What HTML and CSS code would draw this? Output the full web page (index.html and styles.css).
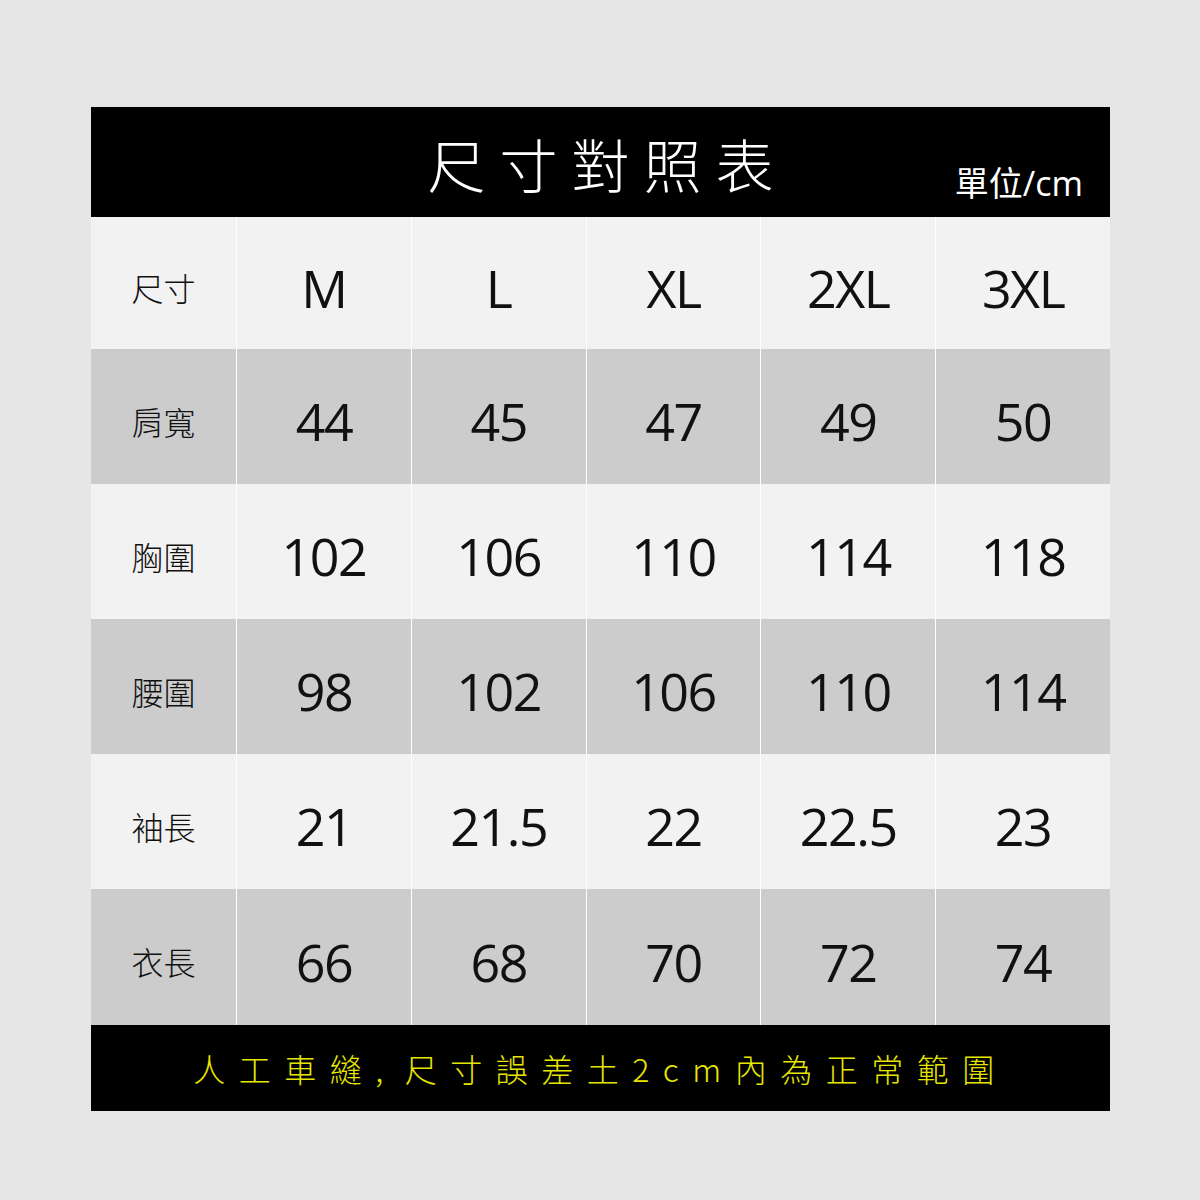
FILE: index.html
```html
<!DOCTYPE html>
<html lang="zh-Hant">
<head>
<meta charset="utf-8">
<title>尺寸對照表</title>
<link rel="stylesheet" href="styles.css">
</head>
<body>
<div class="chart">
  <div class="head">
    <h1 class="title">尺寸對照表</h1>
    <span class="unit">單位/cm</span>
  </div>
  <div class="row light">
    <div class="label">尺寸</div><div class="cell">M</div><div class="cell">L</div><div class="cell">XL</div><div class="cell">2XL</div><div class="cell">3XL</div>
  </div>
  <div class="row dark">
    <div class="label">肩寬</div><div class="cell">44</div><div class="cell">45</div><div class="cell">47</div><div class="cell">49</div><div class="cell">50</div>
  </div>
  <div class="row light">
    <div class="label">胸圍</div><div class="cell">102</div><div class="cell">106</div><div class="cell">110</div><div class="cell">114</div><div class="cell">118</div>
  </div>
  <div class="row dark">
    <div class="label">腰圍</div><div class="cell">98</div><div class="cell">102</div><div class="cell">106</div><div class="cell">110</div><div class="cell">114</div>
  </div>
  <div class="row light">
    <div class="label">袖長</div><div class="cell">21</div><div class="cell">21.5</div><div class="cell">22</div><div class="cell">22.5</div><div class="cell">23</div>
  </div>
  <div class="row dark last">
    <div class="label">衣長</div><div class="cell">66</div><div class="cell">68</div><div class="cell">70</div><div class="cell">72</div><div class="cell">74</div>
  </div>
  <div class="foot">人工車縫<span class="comma">,</span>尺寸誤差土2cm內為正常範圍</div>
</div>
</body>
</html>
```
FILE: styles.css
```css
html, body {
  margin: 0;
  padding: 0;
  background: #e6e6e6;
}
body {
  font-family: "Open Sans", "Noto Sans CJK TC", sans-serif;
  color: #111;
}
.chart {
  width: 1019px;
  margin: 107px 0 0 91px;
}
.head {
  height: 110px;
  background: #000;
  display: flex;
  align-items: center;
  justify-content: center;
  position: relative;
}
.title {
  margin: 0;
  font-family: "Noto Sans CJK TC", sans-serif;
  font-weight: 300;
  font-size: 58px;
  letter-spacing: 14px;
  padding-left: 14px;
  color: #fff;
  line-height: 1;
  padding-top: 2px;
}
.unit {
  position: absolute;
  right: 27px;
  bottom: 17px;
  color: #fff;
  font-size: 34px;
  line-height: 1;
  font-family: "Open Sans", "Noto Sans CJK TC", sans-serif;
}
.row {
  display: grid;
  grid-template-columns: 145px repeat(5, 1fr);
  column-gap: 1px;
  background: #fff;
  height: 135px;
}
.row:nth-child(2) { height: 132px; }
.row.last { height: 136px; }
.row > div {
  display: flex;
  align-items: center;
  justify-content: center;
  padding-top: 8px;
  box-sizing: border-box;
}
.light > div { background: #f2f2f2; }
.dark > div { background: #cccccc; }
.label {
  font-family: "Noto Sans CJK TC", sans-serif;
  font-weight: 300;
  font-size: 32px;
}
.cell {
  font-size: 52px;
  letter-spacing: -1.5px;
  color: #111;
}
.foot {
  height: 86px;
  background: #000;
  color: #e6e600;
  display: flex;
  align-items: center;
  justify-content: center;
  font-family: "Noto Sans CJK TC", sans-serif;
  font-weight: 300;
  font-size: 32px;
  letter-spacing: 13.5px;
  box-sizing: border-box;
}
.comma {
  margin-right: 8px;
}
```
